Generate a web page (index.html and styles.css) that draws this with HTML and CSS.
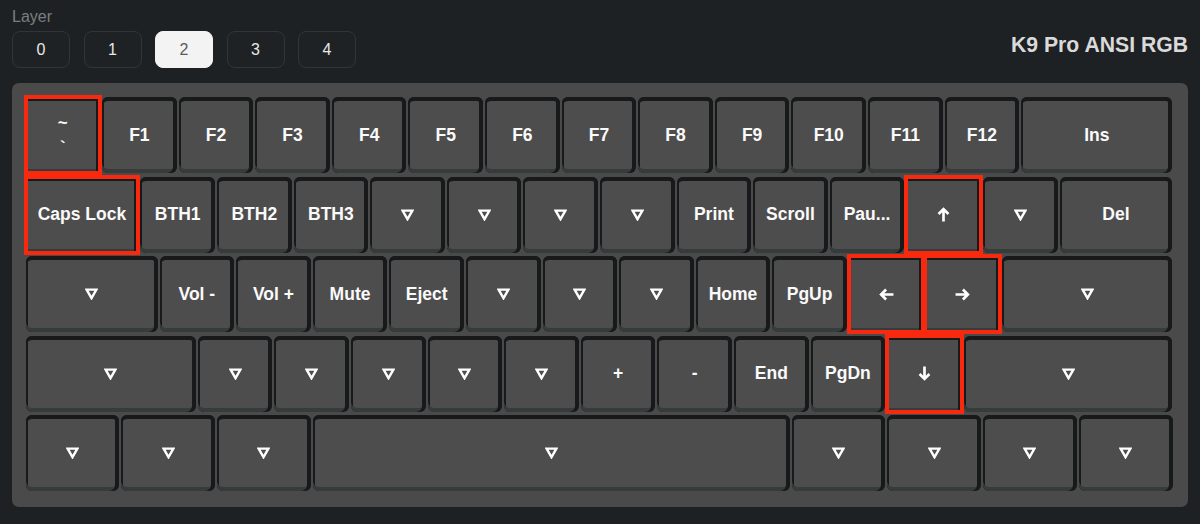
FILE: index.html
```html
<!DOCTYPE html>
<html>
<head>
<meta charset="utf-8">
<link rel="stylesheet" href="styles.css">
</head>
<body>
<svg width="0" height="0" class="defs">
  <defs>
    <symbol id="tri" viewBox="0 0 13 12"><polygon points="1.6,1.6 11.4,1.6 6.5,10.2" fill="none" stroke="#fff" stroke-width="2.4"/></symbol>
    <symbol id="up" viewBox="0 0 12 14"><path d="M6 13.5V2 M1.4 6.6L6 2l4.6 4.6" fill="none" stroke="#fff" stroke-width="2.5"/></symbol>
    <symbol id="down" viewBox="0 0 12 14"><path d="M6 0.5V12 M1.4 7.4L6 12l4.6-4.6" fill="none" stroke="#fff" stroke-width="2.5"/></symbol>
    <symbol id="left" viewBox="0 0 14 12"><path d="M13.5 6H2 M6.6 1.4L2 6l4.6 4.6" fill="none" stroke="#fff" stroke-width="2.5"/></symbol>
    <symbol id="right" viewBox="0 0 14 12"><path d="M0.5 6H12 M7.4 1.4L12 6l-4.6 4.6" fill="none" stroke="#fff" stroke-width="2.5"/></symbol>
  </defs>
</svg>
<div class="app">
  <div class="header">
    <div class="layer-col">
      <div class="layer-label">Layer</div>
      <div class="layers">
        <div class="layer-btn">0</div>
        <div class="layer-btn">1</div>
        <div class="layer-btn active">2</div>
        <div class="layer-btn">3</div>
        <div class="layer-btn">4</div>
      </div>
    </div>
    <div class="title">K9 Pro ANSI RGB</div>
  </div>
  <div class="board">
    <div class="row">
      <div class="key u1 sel"><div class="stack"><span>~</span><span>`</span></div></div>
      <div class="key u1">F1</div>
      <div class="key u1">F2</div>
      <div class="key u1">F3</div>
      <div class="key u1">F4</div>
      <div class="key u1">F5</div>
      <div class="key u1">F6</div>
      <div class="key u1">F7</div>
      <div class="key u1">F8</div>
      <div class="key u1">F9</div>
      <div class="key u1">F10</div>
      <div class="key u1">F11</div>
      <div class="key u1">F12</div>
      <div class="key u2">Ins</div>
    </div>
    <div class="row">
      <div class="key u15 sel">Caps Lock</div>
      <div class="key u1">BTH1</div>
      <div class="key u1">BTH2</div>
      <div class="key u1">BTH3</div>
      <div class="key u1"><svg class="tri"><use href="#tri"/></svg></div>
      <div class="key u1"><svg class="tri"><use href="#tri"/></svg></div>
      <div class="key u1"><svg class="tri"><use href="#tri"/></svg></div>
      <div class="key u1"><svg class="tri"><use href="#tri"/></svg></div>
      <div class="key u1">Print</div>
      <div class="key u1">Scroll</div>
      <div class="key u1">Pau...</div>
      <div class="key u1 sel"><svg class="arr-v"><use href="#up"/></svg></div>
      <div class="key u1"><svg class="tri"><use href="#tri"/></svg></div>
      <div class="key u15">Del</div>
    </div>
    <div class="row">
      <div class="key u175"><svg class="tri"><use href="#tri"/></svg></div>
      <div class="key u1">Vol -</div>
      <div class="key u1">Vol +</div>
      <div class="key u1">Mute</div>
      <div class="key u1">Eject</div>
      <div class="key u1"><svg class="tri"><use href="#tri"/></svg></div>
      <div class="key u1"><svg class="tri"><use href="#tri"/></svg></div>
      <div class="key u1"><svg class="tri"><use href="#tri"/></svg></div>
      <div class="key u1">Home</div>
      <div class="key u1">PgUp</div>
      <div class="key u1 sel"><svg class="arr-h"><use href="#left"/></svg></div>
      <div class="key u1 sel"><svg class="arr-h"><use href="#right"/></svg></div>
      <div class="key u225"><svg class="tri"><use href="#tri"/></svg></div>
    </div>
    <div class="row">
      <div class="key u225"><svg class="tri"><use href="#tri"/></svg></div>
      <div class="key u1"><svg class="tri"><use href="#tri"/></svg></div>
      <div class="key u1"><svg class="tri"><use href="#tri"/></svg></div>
      <div class="key u1"><svg class="tri"><use href="#tri"/></svg></div>
      <div class="key u1"><svg class="tri"><use href="#tri"/></svg></div>
      <div class="key u1"><svg class="tri"><use href="#tri"/></svg></div>
      <div class="key u1">+</div>
      <div class="key u1">-</div>
      <div class="key u1">End</div>
      <div class="key u1">PgDn</div>
      <div class="key u1 sel"><svg class="arr-v"><use href="#down"/></svg></div>
      <div class="key u275"><svg class="tri"><use href="#tri"/></svg></div>
    </div>
    <div class="row">
      <div class="key u125"><svg class="tri"><use href="#tri"/></svg></div>
      <div class="key u125"><svg class="tri"><use href="#tri"/></svg></div>
      <div class="key u125"><svg class="tri"><use href="#tri"/></svg></div>
      <div class="key u625"><svg class="tri"><use href="#tri"/></svg></div>
      <div class="key u125"><svg class="tri"><use href="#tri"/></svg></div>
      <div class="key u125"><svg class="tri"><use href="#tri"/></svg></div>
      <div class="key u125"><svg class="tri"><use href="#tri"/></svg></div>
      <div class="key u125"><svg class="tri"><use href="#tri"/></svg></div>
    </div>
  </div>
</div>
</body>
</html>
```

FILE: styles.css
```css
:root {
  --u: 76.6px;
}

* {
  box-sizing: border-box;
}

body {
  margin: 0;
  background: #1e2123;
  font-family: "Liberation Sans", Arial, sans-serif;
}

.defs {
  position: absolute;
  width: 0;
  height: 0;
}

.app {
  padding: 8px 12px 0;
  width: 1200px;
}

.header {
  display: flex;
  justify-content: space-between;
  align-items: flex-start;
  height: 75px;
}

.layer-label {
  color: #7b7e80;
  font-size: 16px;
  line-height: 18px;
}

.layers {
  display: flex;
  gap: 13.5px;
  margin-top: 5px;
}

.layer-btn {
  width: 58px;
  height: 37px;
  border: 1px solid #313537;
  border-radius: 8px;
  background: #1f2224;
  color: #e8e8e8;
  font-size: 16px;
  display: flex;
  align-items: center;
  justify-content: center;
}

.layer-btn.active {
  background: #f3f3f3;
  border-color: #f3f3f3;
  color: #5a5a5a;
}

.title {
  margin-top: 25px;
  color: #dadada;
  font-weight: 700;
  font-size: 21.2px;
  line-height: 24px;
}

.board {
  width: 1176px;
  height: 424px;
  background: #4a4a4a;
  border-radius: 7px;
  padding: 14px 14.5px 16px 12.5px;
  display: flex;
  flex-direction: column;
  gap: 3.5px;
}

.row {
  display: flex;
  height: 76px;
}

.key {
  flex: none;
  height: 76px;
  margin: 0 1px;
  border-radius: 6px;
  background: #4d4d4d;
  box-shadow:
    inset -4px 0 0 #17191a,
    inset 0 -4px 0 #363b3c,
    inset 0 4px 0 #17191a,
    inset 2px 0 0 #17191a;
  display: flex;
  align-items: center;
  justify-content: center;
  color: #fafafa;
  font-weight: 700;
  font-size: 17.5px;
  white-space: nowrap;
}

.key.sel {
  border-radius: 0;
  outline: 4px solid #f8290f;
  outline-offset: -2px;
}

.u1 { width: calc(var(--u) * 1 - 2px); }
.u125 { width: calc(var(--u) * 1.25 - 2px); }
.u15 { width: calc(var(--u) * 1.5 - 2px); }
.u175 { width: calc(var(--u) * 1.75 - 2px); }
.u2 { width: calc(var(--u) * 2 - 2px); }
.u225 { width: calc(var(--u) * 2.25 - 2px); }
.u275 { width: calc(var(--u) * 2.75 - 2px); }
.u625 { width: calc(var(--u) * 6.25 - 2px); }

.stack {
  display: flex;
  flex-direction: column;
  align-items: center;
  font-size: 17px;
  line-height: 25px;
}

.tri {
  width: 13px;
  height: 12px;
}

.arr-v {
  width: 13px;
  height: 15px;
}

.arr-h {
  width: 15px;
  height: 13px;
}
```
